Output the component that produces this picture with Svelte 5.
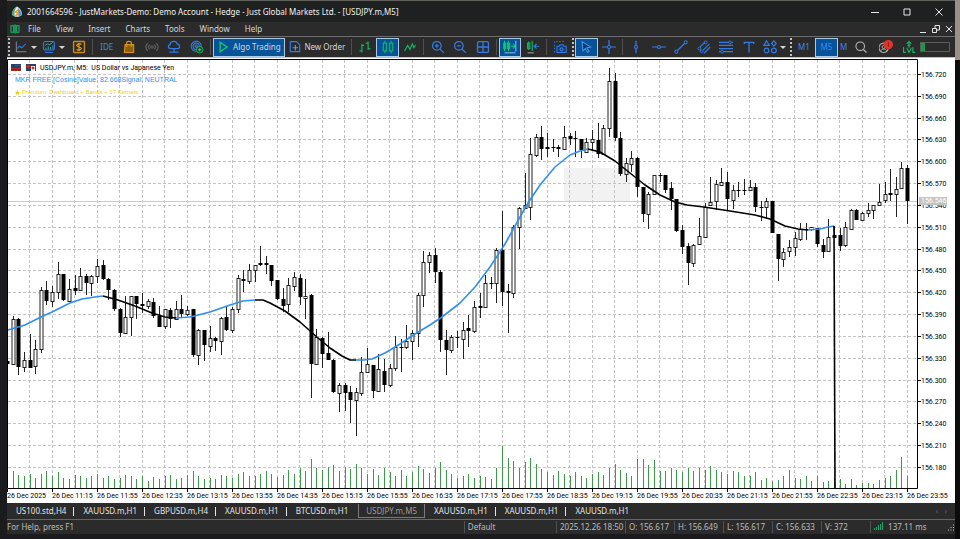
<script>
  const menus = ["File", "View", "Insert", "Charts", "Tools", "Window", "Help"];

  const blue = "#317ce8";
  const green = "#12b062";
  const icons = {
    logo: `<path d="M8 1C4 3 1 8 2 12c2 3 10 3 12 0 1-4-2-9-6-11z" fill="#e8edf0"/><path d="M8 1c-4 2-7 7-6 11l3 2c-1-5 0-9 3-13z" fill="#3fa58c"/><path d="M9 3c3 2 5 6 5 9l-4 2z" fill="#4c8fd0"/><path d="M10 5 6 8l4 2-4 3" stroke="#e89a25" stroke-width="2" fill="none"/>`,
    terminal: `<g stroke="#16b56a" stroke-width="1.6"><path d="M2 3h4v10H2zM8 1v14M10 3h4v10h-4z"/></g>`,
    chart: `<path d="M2 1v13h13" stroke="#7c8792" stroke-width="1.3"/><path d="m3 10 3-3 3 2 5-5" stroke="${blue}" stroke-width="1.4"/>`,
    panel: `<rect x="1" y="1" width="14" height="11" rx="2" stroke="${blue}" stroke-width="1.3"/><path d="m3 6 3-2 3 1 4-3M4 11V9M7 11V7M10 11V8M13 11V6" stroke="#38a5b5" stroke-width="1.2"/><path d="M3 15h10" stroke="${blue}" stroke-width="1.4"/>`,
    dollar: `<rect x="1" y="1" width="14" height="14" rx="1" stroke="#c98a12" stroke-width="1.8"/><path d="M11 5c-1-2-6-1-6 1s6 2 6 4-5 3-6 1M8 3v10" stroke="#f0a51c" stroke-width="1.4"/>`,
    bag: `<path d="M3 5h11v10H2z" fill="#8a5f0e" stroke="#d8941a" stroke-width="1.4"/><path d="M5 8V3c0-3 6-3 6 0v5" stroke="#d8941a" stroke-width="1.5"/>`,
    signal: `<g stroke="#666" stroke-width="1.3"><circle cx="8" cy="8" r="1.500"/><path d="M5 5c-2 2-2 4 0 6M11 5c2 2 2 4 0 6M2.500 3c-3 3-3 7 0 10M13.500 3c3 3 3 7 0 10"/></g>`,
    cloud: `<path d="M4 10c-4 0-4-5-1-5 0-5 8-6 9-1 4 0 4 6 1 6z" stroke="${blue}" stroke-width="1.6"/><path d="M8 10v4M2 14.500h12" stroke="${blue}" stroke-width="1.6"/>`,
    rings: `<g stroke="${blue}" stroke-width="1.4"><circle cx="7" cy="7" r="6.500"/><circle cx="7" cy="7" r="4"/><circle cx="7" cy="7" r="1.500"/></g><circle cx="11.500" cy="11.500" r="4.200" fill="#1c3f2c" stroke="#18b765" stroke-width="1.2"/><path d="M9.500 11.500h4M11.500 9.500v4" stroke="#3ddb86" stroke-width="1.3"/>`,
    play: `<path d="m3 2 9 6-9 6z" stroke="#18c46c" stroke-width="1.800"/>`,
    order: `<path d="M2 1h8l4 4v9H2z" stroke="${blue}" stroke-width="1.5"/><path d="M5 9h7M8.500 5.500v7" stroke="#5b96f0" stroke-width="1.5"/>`,
    bars: `<path d="M4 4v11M1 13h3M4 6h3M12 1v11M9 3h3M12 10h3" stroke="${green}" stroke-width="1.6"/>`,
    candles: `<g stroke="${green}" stroke-width="1.6"><rect x="2" y="3" width="4" height="10"/><rect x="10" y="3" width="4" height="10"/><path d="M4 0v3M4 13v3M12 0v3M12 13v3"/></g>`,
    line: `<path d="m1 13 4-7 3 5 3-7 2 5 2-4" stroke="${green}" stroke-width="1.6"/>`,
    zoomin: `<g stroke="${blue}" stroke-width="1.6"><circle cx="6.500" cy="6.500" r="5.500"/><path d="m10.500 10.500 5 5M4 6.500h5M6.500 4v5"/></g>`,
    zoomout: `<g stroke="${blue}" stroke-width="1.6"><circle cx="6.500" cy="6.500" r="5.500"/><path d="m10.500 10.500 5 5M4 6.500h5"/></g>`,
    tiles: `<rect x="1" y="1" width="14" height="14" rx="2" stroke="${blue}" stroke-width="1.7"/><path d="M8 1v14M1 8h14" stroke="${blue}" stroke-width="1.7"/>`,
    scroll: `<g stroke="#12c76e" stroke-width="1.4"><rect x="0" y="3" width="2.500" height="7"/><rect x="5" y="3" width="2.500" height="7"/><path d="M1 0v13M6 0v13M9 7h5m-2-3 2.500 3-2.500 3"/></g><path d="M15.500 0v14M1 15.500h14" stroke="#9cc4f0" stroke-width="1.2"/>`,
    shift: `<g stroke="${green}" stroke-width="1.5"><rect x="1" y="3" width="3" height="7"/><path d="M2.500 1v11M7 0v13"/></g><path d="M16 7H9.500m3-3-3 3 3 3" stroke="${blue}" stroke-width="1.500"/><path d="M1 15.500h8" stroke="#ccc"/>`,
    camera: `<path d="M1 15V1h14" stroke="${blue}" stroke-width="1.2" stroke-dasharray="2 2"/><path d="M4 7h3l1-2h4l1 2h3v8H4z" fill="#14386f" stroke="${blue}" stroke-width="1.3"/><circle cx="10" cy="11" r="2" stroke="#5b96f0" stroke-width="1.2"/>`,
    pointer: `<path d="m3 1 11 7-5 1 3 5-2 1-3-5-3 3z" fill="#10386b" stroke="#4a94ee" stroke-width="1.3"/>`,
    cross: `<path d="M8-1v7M8 10v7M-1 8h7M10 8h7" stroke="${blue}" stroke-width="1.6"/><circle cx="8" cy="8" r="2" stroke="${blue}" stroke-width="1.3"/>`,
    vline: `<path d="M8 0v6M8 10v6" stroke="${blue}" stroke-width="1.6"/><circle cx="8" cy="8" r="2" stroke="${blue}" stroke-width="1.4"/>`,
    hline: `<path d="M-1 8h7M10 8h7" stroke="${blue}" stroke-width="1.6"/><circle cx="8" cy="8" r="2" stroke="${blue}" stroke-width="1.4"/>`,
    trend: `<path d="M3.500 12.500 12.500 3.500" stroke="${blue}" stroke-width="1.5"/><circle cx="2" cy="14" r="2" stroke="${blue}" stroke-width="1.3"/><circle cx="14" cy="2" r="2" stroke="${blue}" stroke-width="1.3"/>`,
    channel: `<path d="m3 8 6-6M7 12l8-8M8 16l8-8" stroke="${blue}" stroke-width="1.5"/><circle cx="2" cy="10" r="1.800" stroke="${blue}" stroke-width="1.2"/><circle cx="10" cy="2" r="1.800" stroke="${blue}" stroke-width="1.2"/><circle cx="5" cy="13.500" r="1.800" stroke="${blue}" stroke-width="1.2"/>`,
    fibo: `<path d="M-1 2h18M-1 6h18M-1 10h18M-1 14h18" stroke="${blue}" stroke-width="1.5"/><circle cx="3" cy="14" r="1.800" fill="#2b2b2b" stroke="${blue}" stroke-width="1.2"/><circle cx="13" cy="2" r="1.800" fill="#2b2b2b" stroke="${blue}" stroke-width="1.2"/>`,
    text: `<path d="M2 4V2h12v2M8 2v13" stroke="${blue}" stroke-width="1.700"/>`,
    shapes: `<g stroke="${blue}" stroke-width="1.5"><path d="m0 6 3.500-6L7 6zM13 0l3 3.500L13 7 10 3.500z"/><circle cx="3.500" cy="12.500" r="3"/><circle cx="13" cy="12.500" r="3"/></g>`,
    search: `<circle cx="7" cy="7" r="5.500" stroke="#b8b8b8" stroke-width="1.4"/><path d="m11 11 4 4" stroke="#b8b8b8" stroke-width="1.600"/>`,
    user: `<circle cx="5" cy="9" r="6" stroke="#b0b0b0" stroke-width="1.4"/><circle cx="5" cy="8" r="2" stroke="#b0b0b0" stroke-width="1.2"/><path d="M1 13c2-3 6-3 8 0" stroke="#b0b0b0" stroke-width="1.2"/><circle cx="11" cy="5" r="6" fill="#e0352b"/><path d="M11 2v6" stroke="#8b1510" stroke-width="1.2"/>`,
    level: `<path d="M8 9V1M5 4l3-3 3 3M6 6h4M1 8v7h3M5 9l3 6 3-6M13 8v7h3" stroke="#14b567" stroke-width="1.5"/>`,
  };

  const tools = [
    { kind: "grip" },
    { icon: "chart", name: "New chart", caret: true },
    { icon: "panel", name: "Profiles", caret: true },
    { icon: "dollar", name: "Market" },
    { kind: "sep" },
    { label: "IDE", name: "IDE" },
    { icon: "bag", name: "Store" },
    { icon: "signal", name: "Signals" },
    { icon: "cloud", name: "VPS" },
    { icon: "rings", name: "Community" },
    { kind: "sep" },
    { icon: "play", label: "Algo Trading", name: "Algo Trading", active: true, size: "algo" },
    { icon: "order", label: "New Order", name: "New Order", size: "order" },
    { kind: "sep" },
    { icon: "bars", name: "Bar chart" },
    { icon: "candles", name: "Candlesticks", active: true },
    { icon: "line", name: "Line chart" },
    { kind: "sep" },
    { icon: "zoomin", name: "Zoom in" },
    { icon: "zoomout", name: "Zoom out" },
    { icon: "tiles", name: "Tile windows" },
    { kind: "sep" },
    { icon: "scroll", name: "Auto scroll", active: true },
    { icon: "shift", name: "Chart shift" },
    { kind: "sep" },
    { icon: "camera", name: "Screenshot" },
    { kind: "grip" },
    { icon: "pointer", name: "Cursor", active: true },
    { icon: "cross", name: "Crosshair" },
    { kind: "sep" },
    { icon: "vline", name: "Vertical line" },
    { icon: "hline", name: "Horizontal line" },
    { icon: "trend", name: "Trendline" },
    { icon: "channel", name: "Channel" },
    { icon: "fibo", name: "Fibonacci" },
    { icon: "text", name: "Text" },
    { icon: "shapes", name: "Shapes", caret: true },
    { kind: "grip" },
    { label: "M1", name: "M1" },
    { label: "M5", name: "M5", active: true },
    { label: "M", name: "M15", size: "cut" },
    { icon: "search", name: "Search", size: "search" },
    { icon: "user", name: "Account" },
    { icon: "level", name: "Level" },
  ];

  const tabs = [
    "US100.std,H4", "XAUUSD.m,H1", "GBPUSD.m,H4", "XAUUSD.m,H1", "BTCUSD.m,H1",
    "USDJPY.m,M5", "XAUUSD.m,H1", "XAUUSD.m,H1", "XAUUSD.m,H1",
  ];
  const activeTab = 5;

  const times = [
    "26 Dec 2025", "26 Dec 11:15", "26 Dec 11:55", "26 Dec 12:35", "26 Dec 13:15", "26 Dec 13:55", "26 Dec 14:35",
    "26 Dec 15:15", "26 Dec 15:55", "26 Dec 16:35", "26 Dec 17:15", "26 Dec 17:55", "26 Dec 18:35", "26 Dec 19:15",
    "26 Dec 19:55", "26 Dec 20:35", "26 Dec 21:15", "26 Dec 21:55", "26 Dec 22:35", "26 Dec 23:15", "26 Dec 23:55",
  ];
  const prices = Array.from({ length: 19 }, (_, i) => (156.72 - i * 0.03).toFixed(3));
  const priceY = (i) => Math.round(74 + i * 21.83) + 0.5;

  // high, body top, body bottom, low; d = down candle, u = up candle
  const candles = `d340 361 364 365,u316 319 364 365,d318 319 367 375,u352 360 367 372,d334 360 368 368,u340 349 366 374,u287 290 349 353,d281 290 301 305,u286 292 301 307,u262 274 292 299
d274 274 300 301,u279 289 301 301,d275 288 291 295,u268 276 290 291,d274 276 283 295,u275 276 283 296,u259 266 276 283,d260 265 279 280,d278 279 290 300,d289 290 309 311
d308 309 333 337,u296 317 333 334,u296 296 317 336,d296 296 304 319,d293 304 306 313,u299 301 306 309,d298 302 316 318,d306 316 327 327,u309 309 326 329,d308 310 319 328
u301 309 319 319,d295 309 314 317,u306 310 314 316,d309 309 355 357,u329 330 355 365,d330 330 345 361,u326 338 346 352,d337 338 341 351,u317 318 341 355,d307 317 330 331
u307 309 330 333,u275 278 309 313,d270 279 281 292,u264 270 281 284,u265 265 270 282,d246 263 265 266,d256 263 265 274,d265 265 281 286,d280 280 299 300,d288 299 306 312
u278 285 304 312,u272 277 286 291,d274 278 297 305,u279 296 298 319,d294 295 364 398,u329 337 364 365,d337 338 354 368,d332 353 360 360,d359 360 392 393,u383 385 393 412
d383 385 393 411,d386 392 400 423,u388 392 400 436,u357 372 393 396,u348 364 372 373,d365 365 391 398,u354 369 391 392,d359 371 385 392,u364 368 385 387,u336 347 368 371
d339 347 348 372,u325 341 347 349,u330 333 341 360,u293 295 333 347,u251 262 295 307,u252 255 262 273,d248 255 272 283,d270 272 340 352,d330 340 350 375,u335 337 350 353
d331 337 338 348,u322 330 339 359,d315 328 331 347,u301 307 331 333,d293 306 308 318,u275 283 307 307,d277 283 284 289,u248 250 283 303,d211 250 292 306,d284 291 293 333
u225 227 293 298,u207 208 227 249,u173 205 208 208,u138 154 207 220,u134 137 155 157,d126 137 149 160,d133 147 149 157,d139 147 148 152,d145 147 149 157,u126 137 149 149
d133 136 139 145,d131 138 139 157,d139 139 150 158,u138 142 152 153,u130 139 142 150,d123 140 154 158,u125 128 154 155,u68 81 128 137,d73 81 138 141,d132 138 174 176
u158 163 174 182,u151 158 164 172,d157 158 187 197,d187 187 214 222,u192 194 214 229,u175 175 194 194,d173 175 176 182,d175 175 190 193,d182 188 199 210,d199 199 231 232
d225 230 247 254,d243 246 263 285,u244 245 263 267,u218 236 244 245,u203 207 237 237,u177 202 205 205,u180 184 201 210,u168 182 185 185,d172 182 199 210,u185 190 200 209
d182 190 191 197,d179 190 191 195,u180 187 190 190,d183 187 207 212,d201 207 208 221,u198 201 207 218,d201 201 233 233,d234 234 259 281,u248 252 259 267,u240 247 251 257
u232 238 247 256,u223 229 239 241,d223 229 230 240,u227 227 229 231,d228 228 244 247,d239 245 252 258,u219 237 251 251,d227 235 238 238,d228 235 246 251,u222 227 245 247
u209 210 229 229,d209 210 220 220,u212 213 220 220,u203 210 213 217,u205 205 210 219,u184 202 205 205,u182 194 200 203,d169 193 195 201,u177 189 194 217,u162 168 188 188,d165 168 201 224`
    .split(/[,\n]/)
    .map((row, i) => {
      const [high, top, bottom, low] = row.trim().slice(1).split(" ").map(Number);
      return { x: Math.round(7 + i * 5.625) + 0.5, up: row.trim()[0] === "u", high, top, bottom, low };
    });

  const volumes = [
    14, 17, 13, 12, 14, 10, 14, 17, 12, 16, 10, 9, 13, 12, 10, 12, 14, 10, 12, 9,
    10, 13, 12, 9, 12, 7, 11, 9, 12, 13, 9, 10, 13, 17, 12, 9, 10, 9, 13, 12,
    10, 14, 16, 12, 12, 14, 17, 14, 11, 13, 18, 14, 20, 17, 29, 20, 18, 21, 23, 17,
    21, 19, 24, 20, 14, 19, 13, 20, 16, 12, 18, 12, 16, 22, 19, 15, 20, 26, 18, 14,
    10, 12, 14, 10, 12, 11, 9, 20, 42, 30, 27, 20, 26, 30, 24, 19, 16, 13, 17, 14,
    12, 16, 12, 10, 14, 16, 13, 20, 24, 18, 15, 12, 29, 29, 23, 28, 17, 17, 20, 18,
    16, 20, 17, 20, 18, 22, 18, 16, 14, 17, 16, 12, 12, 16, 8, 10, 7, 8, 12, 18,
    10, 9, 12, 7, 12, 6, 7, 10, 9, 4, 9, 3, 5, 5, 4, 8, 10, 12, 18, 31, 12,
  ];

  const average = [
    { down: false, points: "8,330 25,325 41,317 52,312 70,303 82,299 95,297 103,296" },
    { down: true, points: "103,296 118,300 135,306 152,313 165,317 176,318" },
    { down: false, points: "176,318 190,317 210,312 230,305 243,301 255,300" },
    { down: true, points: "255,300 263,300 270,303 285,311 300,322 318,338 330,348 342,356 350,360 356,360" },
    {
      down: false,
      points:
        "356,360 364,360 372,359 385,353 400,344 415,334 430,325 442,317 460,303 475,287 490,267 505,244 520,217 528,203 540,185 555,167 570,155 580,151 588,149",
    },
    {
      down: true,
      points:
        "588,149 600,152 615,161 630,173 645,185 660,195 675,202 687,205 704,207 730,211 755,215 770,219 785,226 798,229 808,230",
    },
    { down: false, points: "808,230 820,229 828,227 834,226" },
    { down: true, points: "834,226 835,488" },
  ];

  const quotes = ["O: 156.617", "H: 156.649", "L: 156.617", "C: 156.633", "V: 372"];
</script>

{#snippet icon(name)}
  <svg class="icon" viewBox="-1 -1 18 18" fill="none" aria-hidden="true">{@html icons[name]}</svg>
{/snippet}

<div class="desktop">
  <div class="window">
    <header class="title">
      {@render icon("logo")}
      <span class="caption">2001664596 - JustMarkets-Demo: Demo Account - Hedge - Just Global Markets Ltd. - [USDJPY.m,M5]</span>
      <button aria-label="Minimize"><svg viewBox="0 0 8 8"><path d="M0 4.500h8" /></svg></button>
      <button aria-label="Maximize"><svg viewBox="0 0 8 8"><path d="M1 1h6v6H1z" /></svg></button>
      <button aria-label="Close"><svg viewBox="0 0 8 8"><path d="m.5.5 7 7M7.500.5l-7 7" /></svg></button>
    </header>

    <nav class="menu">
      {@render icon("terminal")}
      {#each menus as item}
        <button>{item}</button>
      {/each}
      <div class="mdi">
        <button aria-label="Minimize chart"><svg viewBox="0 0 8 8"><path d="M1 7.500h6" /></svg></button>
        <button aria-label="Restore chart"><svg viewBox="0 0 8 8"><path d="M.5 3.500h4v4h-4zM3 3V.5h4.500V5H5" /></svg></button>
        <button aria-label="Close chart"><svg viewBox="0 0 8 8"><path d="m1 1 6 6M7 1 1 7" /></svg></button>
      </div>
    </nav>

    <div class="toolbar">
      {#each tools as tool}
        {#if tool.kind}
          <span class={tool.kind}></span>
        {:else}
          <button class="tool {tool.size ?? ''}" class:active={tool.active} class:drop={tool.caret} aria-label={tool.name}>
            {#if tool.icon}{@render icon(tool.icon)}{/if}
            {#if tool.label}<span>{tool.label}</span>{/if}
            {#if tool.caret}<i class="caret"></i>{/if}
          </button>
        {/if}
      {/each}
      <div class="meter"><div></div></div>
    </div>

    <svg class="chart" viewBox="7 58 948 445" role="img" aria-label="USDJPY.m, M5 chart">
      <rect x="7" y="58" width="948" height="445" fill="#fff" />
      <rect x="564" y="168" width="66" height="34" fill="#f2f2f2" />
      <g class="grid">
        {#each prices as _, i}
          <path d="M8 {priceY(i)}H917" />
        {/each}
        {#each Array(40) as _, i}
          <path d="M{Math.round(29 + i * 22.5) + 0.5} 60V488" />
        {/each}
      </g>
      <path d="M8 201.500H917" stroke="#ccc" />

      {#each volumes as v, i}
        <path d="M{candles[i].x} 488v{-v}" stroke="#3c9a48" />
      {/each}

      {#each candles as c}
        <path d="M{c.x} {c.high}V{c.low}" stroke="#222" />
        {#if c.up}
          <rect x={c.x - 1.5} y={c.top + 0.5} width="3" height={Math.max(c.bottom - c.top, 2)} fill="#fff" stroke="#222" />
        {:else}
          <rect x={c.x - 2} y={c.top} width="4" height={Math.max(c.bottom - c.top, 1)} fill="#000" />
        {/if}
      {/each}

      {#each average as part}
        <polyline points={part.points} fill="none" stroke={part.down ? "#000" : "#2e8ff0"} stroke-width="1.600" stroke-linejoin="round" />
      {/each}

      <path d="M7.500 488.500V59.500H917.500V488.500z" fill="none" stroke="#000" />

      <rect x="11" y="64" width="10" height="7" fill="#27406e" />
      <path d="M15 65.500h6M11 68.500h10M11 70.500h10" stroke="#a8322a" />
      <rect x="26" y="64" width="10" height="7" fill="#27406e" />
      <path d="M28 64v5M26 66.500h5" stroke="#c0392b" />
      <path d="M31 66h4v5h-4z" fill="#fff" />
      <circle cx="33" cy="68" r="1.500" fill="#c0392b" />
      <text class="axis" x="40" y="70">USDJPY.m, M5:&nbsp; US Dollar vs Japanese Yen</text>
      <text class="note" x="15" y="82">MKR FREE [Cosine]Value: 82.668Signal: NEUTRAL</text>
      <path d="m17.500 90 .8 1.700 1.900.2-1.400 1.200.4 1.900-1.700-1-1.700 1 .4-1.900-1.400-1.200 1.900-.2z" fill="#ecd015" />
      <text class="note premium" x="22" y="94">Premium: Dashboard + Bands + 17 Kernels</text>

      {#each prices as price, i}
        <path d="M918 {priceY(i)}h3" stroke="#000" />
        <text class="axis" x="921" y={priceY(i) + 2.5}>{price}</text>
      {/each}
      <rect x="919" y="197" width="28" height="8" fill="#c4c4c4" />
      <text class="axis tag" x="921" y="203">156.546</text>

      {#each times as time, i}
        <path d="M{7.5 + i * 45} 489v3" stroke="#000" />
        <text class="axis" x={7 + i * 45} y="498">{time}</text>
      {/each}
    </svg>

    <div class="tabs">
      {#each tabs as tab, i}
        <button class:current={i === activeTab} class:before={i === activeTab - 1}>{tab}</button>
      {/each}
      <span class="arrows">‹ &nbsp; ›</span>
    </div>

    <footer class="status">
      <span class="help">For Help, press F1</span>
      <span class="profile">Default</span>
      <span class="time">2025.12.26 18:50</span>
      {#each quotes as quote}
        <span class="quote">{quote}</span>
      {/each}
      <span class="ping">
        <svg viewBox="0 0 10 8"><path d="M.5 8V6M2.500 8V5M4.500 8V3M6.500 8V2M8.500 8V0" /></svg>
        137.11 ms
      </span>
      <svg class="corner" viewBox="0 0 7 7"><path d="M5 1h1M2.500 3.500h1M5 3.500h1M0 6h1M2.500 6h1M5 6h1" /></svg>
    </footer>
  </div>
</div>

<style>
  :global(body) {
    background: #141414;
  }

  .desktop {
    padding: 0 5px 5px 7px;
    background: linear-gradient(#9b9087 0 60px, #0c0c0c 60px) right / 5px 100% no-repeat, #1b1b1d;
    font-family: "Noto Sans", "Open Sans", sans-serif;
    font-size: 8px;
    line-height: 12px;
    color: #d6d6d6;
  }

  .window {
    display: flex;
    flex-direction: column;
    background: #2b2b2b;
  }

  button {
    font: inherit;
    color: inherit;
    background: none;
    border: 0;
    padding: 0;
    margin: 0;
    white-space: nowrap;
  }

  .icon {
    width: 14px;
    height: 14px;
    flex: none;
  }

  .title {
    display: flex;
    align-items: center;
    height: 21px;
    border-top: 1px solid #5f625c;
    background: #1f2020;
    color: #f2f2f2;
    padding-left: 3px;
  }

  .caption {
    flex: 1;
    padding-left: 3px;
    white-space: nowrap;
    overflow: hidden;
  }

  .title button,
  .mdi button {
    display: flex;
    justify-content: center;
    width: 32px;
  }

  .title button svg,
  .mdi svg {
    width: 8px;
    height: 8px;
    fill: none;
    stroke: #e6e6e6;
  }

  .menu {
    display: flex;
    align-items: center;
    gap: 15px;
    height: 14px;
    padding-left: 2px;
    border-bottom: 1px solid #6c6c6c;
  }

  .menu .icon {
    width: 12px;
    height: 12px;
    margin-right: -8px;
  }

  .mdi {
    display: flex;
    margin-left: auto;
  }

  .mdi button {
    width: 13px;
  }

  .toolbar {
    display: flex;
    align-items: center;
    height: 20px;
    padding-right: 5px;
    border-bottom: 1px solid #bdbdbd;
  }

  .grip {
    width: 0;
    height: 18px;
    margin: 0 1px;
    border-left: 2px dotted #c0c0c0;
  }

  .sep {
    width: 1px;
    height: 16px;
    margin: 0 2px;
    background: #505050;
  }

  .tool {
    display: flex;
    flex: 1 0 22px;
    align-items: center;
    justify-content: center;
    box-sizing: border-box;
    height: 19px;
    color: #3f86ea;
  }

  .drop {
    flex-basis: 28px;
    gap: 3px;
  }

  .caret {
    border: 3px solid transparent;
    border-top-color: #d8d8d8;
    border-bottom: 0;
  }

  .active {
    background: #07539a;
    border: 1px solid #a9c9e6;
  }

  .algo,
  .order {
    flex: none;
    gap: 2px;
    color: #d6d6d6;
  }

  .algo {
    width: 72px;
  }

  .order {
    width: 64px;
  }

  .cut {
    flex: none;
    width: 12px;
  }

  .search {
    margin-right: 3px;
  }

  .meter {
    width: 30px;
    height: 10px;
    box-sizing: border-box;
    border: 1px solid #5b5b5b;
  }

  .meter div {
    width: 16%;
    height: 100%;
    background: #1d9a45;
  }

  .chart {
    display: block;
    width: 100%;
    height: auto;
  }

  .grid {
    stroke: #c4c4c4;
    stroke-dasharray: 3 2;
  }

  .axis {
    font: 7px Roboto, "Liberation Sans", sans-serif;
    fill: #000;
  }

  .tag {
    fill: #fff;
  }

  .note {
    font: 7px "Liberation Sans", sans-serif;
    fill: #2e8ff0;
  }

  .premium {
    font-size: 6px;
    fill: #ecd015;
  }

  .tabs {
    display: flex;
    align-items: center;
    height: 16px;
    border-bottom: 1px solid #666;
    color: #e4e4e4;
  }

  .tabs button {
    position: relative;
    height: 14px;
    padding: 0 8px 0 9px;
  }

  .tabs button:not(.current, .before)::after {
    content: "";
    position: absolute;
    right: 0;
    top: 3px;
    height: 9px;
    border-right: 1px solid #e4e4e4;
  }

  .tabs button:nth-last-child(2)::after {
    display: none;
  }

  .tabs .current {
    border: 1px solid #7a7a7a;
    border-top: 0;
    color: #9c9c9c;
    margin-left: 2px;
    padding: 0 7px;
  }

  .arrows {
    margin-left: auto;
    padding-right: 8px;
    color: #666;
  }

  .status {
    display: flex;
    align-items: center;
    height: 14px;
    color: #bcbcbc;
  }

  .status span {
    box-sizing: border-box;
    padding-left: 3px;
    border-left: 1px solid #505050;
    white-space: nowrap;
  }

  .status .help {
    flex: 461;
    padding: 0;
    border: 0;
  }

  .status .profile {
    flex: 89;
  }

  .status .time {
    width: 69px;
  }

  .status .quote {
    width: 49px;
  }

  .status .ping {
    width: 78px;
  }

  .ping svg {
    width: 10px;
    height: 8px;
    margin-right: 2px;
    stroke: #1ca566;
  }

  .corner {
    width: 7px;
    height: 7px;
    stroke: #bbb;
  }
</style>
